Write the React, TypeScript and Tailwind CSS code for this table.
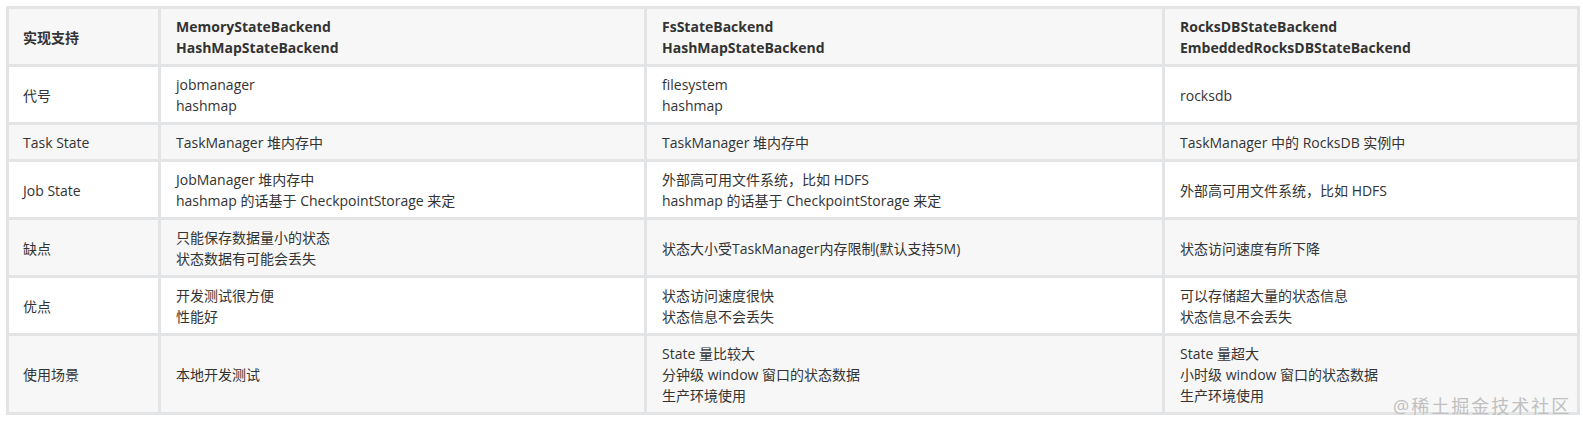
import React from "react";

const rows: { label: string; cells: string[][]; bold?: boolean }[] = [
  {
    label: "实现支持",
    bold: true,
    cells: [
      ["MemoryStateBackend", "HashMapStateBackend"],
      ["FsStateBackend", "HashMapStateBackend"],
      ["RocksDBStateBackend", "EmbeddedRocksDBStateBackend"],
    ],
  },
  {
    label: "代号",
    cells: [["jobmanager", "hashmap"], ["filesystem", "hashmap"], ["rocksdb"]],
  },
  {
    label: "Task State",
    cells: [["TaskManager 堆内存中"], ["TaskManager 堆内存中"], ["TaskManager 中的 RocksDB 实例中"]],
  },
  {
    label: "Job State",
    cells: [
      ["JobManager 堆内存中", "hashmap 的话基于 CheckpointStorage 来定"],
      ["外部高可用文件系统，比如 HDFS", "hashmap 的话基于 CheckpointStorage 来定"],
      ["外部高可用文件系统，比如 HDFS"],
    ],
  },
  {
    label: "缺点",
    cells: [
      ["只能保存数据量小的状态", "状态数据有可能会丢失"],
      ["状态大小受TaskManager内存限制(默认支持5M)"],
      ["状态访问速度有所下降"],
    ],
  },
  {
    label: "优点",
    cells: [
      ["开发测试很方便", "性能好"],
      ["状态访问速度很快", "状态信息不会丢失"],
      ["可以存储超大量的状态信息", "状态信息不会丢失"],
    ],
  },
  {
    label: "使用场景",
    cells: [
      ["本地开发测试"],
      ["State 量比较大", "分钟级 window 窗口的状态数据", "生产环境使用"],
      ["State 量超大", "小时级 window 窗口的状态数据", "生产环境使用"],
    ],
  },
];

export default function App() {
  return (
    <div
      className="relative w-[1583px] h-[426px] bg-white pt-[6px] pl-[6px] text-[#333333] text-[14px] leading-[21px]"
      style={{ fontFamily: '"Open Sans", "Noto Sans CJK SC", sans-serif' }}
    >
      <table className="table-fixed border-collapse w-[1571px] border-[3px] border-[#e3e4e6]">
        <colgroup>
          <col className="w-[152px]" />
          <col className="w-[486px]" />
          <col className="w-[518px]" />
          <col className="w-[415px]" />
        </colgroup>
        <tbody>
          {rows.map((r, i) => (
            <tr key={i} className={i % 2 === 0 ? "bg-[#f7f7f7]" : "bg-white"}>
              <td
                className={`border-[3px] border-[#e3e4e6] pl-[14px] pr-3 pt-[7px] pb-[6px] align-middle ${
                  r.bold ? "font-bold" : ""
                }`}
              >
                {r.label}
              </td>
              {r.cells.map((c, j) => (
                <td
                  key={j}
                  className={`border-[3px] border-[#e3e4e6] pl-[15px] pr-3 pt-[7px] pb-[6px] align-middle ${
                    r.bold ? "font-bold" : ""
                  }`}
                >
                  {c.map((line, k) => (
                    <div key={k} className="h-[21px] whitespace-nowrap">
                      {line}
                    </div>
                  ))}
                </td>
              ))}
            </tr>
          ))}
        </tbody>
      </table>
      <div className="absolute left-[1393px] top-[395px] text-[18px] leading-[22px] text-[#c0c0c0] tracking-[2px]">
        @稀土掘金技术社区
      </div>
    </div>
  );
}
